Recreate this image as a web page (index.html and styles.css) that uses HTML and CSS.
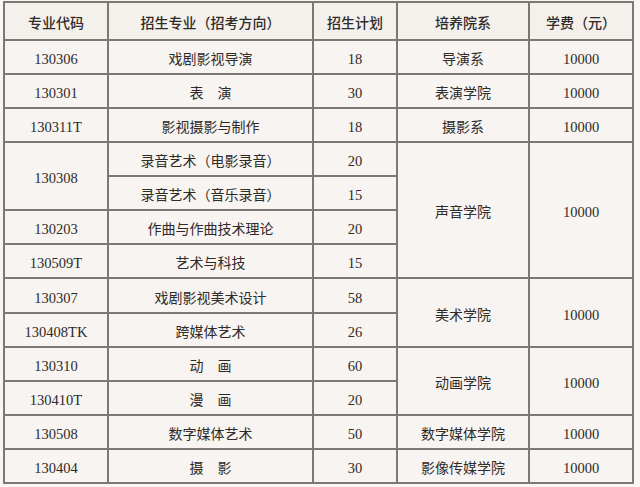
FILE: index.html
```html
<!DOCTYPE html>
<html lang="zh">
<head>
<meta charset="utf-8">
<link rel="stylesheet" href="styles.css">
</head>
<body>
<table class="plan">
  <colgroup>
    <col class="c1"><col class="c2"><col class="c3"><col class="c4"><col class="c5">
  </colgroup>
  <thead>
    <tr class="head">
      <th>专业代码</th><th>招生专业（招考方向）</th><th>招生计划</th><th>培养院系</th><th>学费（元）</th>
    </tr>
  </thead>
  <tbody>
    <tr><td class="num">130306</td><td>戏剧影视导演</td><td class="num">18</td><td>导演系</td><td class="num">10000</td></tr>
    <tr><td class="num">130301</td><td>表　演</td><td class="num">30</td><td>表演学院</td><td class="num">10000</td></tr>
    <tr><td class="num">130311T</td><td>影视摄影与制作</td><td class="num">18</td><td>摄影系</td><td class="num">10000</td></tr>
    <tr><td class="num" rowspan="2">130308</td><td>录音艺术（电影录音）</td><td class="num">20</td><td rowspan="4">声音学院</td><td class="num" rowspan="4">10000</td></tr>
    <tr><td>录音艺术（音乐录音）</td><td class="num">15</td></tr>
    <tr><td class="num">130203</td><td>作曲与作曲技术理论</td><td class="num">20</td></tr>
    <tr><td class="num">130509T</td><td>艺术与科技</td><td class="num">15</td></tr>
    <tr><td class="num">130307</td><td>戏剧影视美术设计</td><td class="num">58</td><td rowspan="2">美术学院</td><td class="num" rowspan="2">10000</td></tr>
    <tr><td class="num">130408TK</td><td>跨媒体艺术</td><td class="num">26</td></tr>
    <tr><td class="num">130310</td><td>动　画</td><td class="num">60</td><td rowspan="2">动画学院</td><td class="num" rowspan="2">10000</td></tr>
    <tr><td class="num">130410T</td><td>漫　画</td><td class="num">20</td></tr>
    <tr><td class="num">130508</td><td>数字媒体艺术</td><td class="num">50</td><td>数字媒体学院</td><td class="num">10000</td></tr>
    <tr><td class="num">130404</td><td>摄　影</td><td class="num">30</td><td>影像传媒学院</td><td class="num">10000</td></tr>
  </tbody>
</table>
</body>
</html>
```

FILE: styles.css
```css
html, body {
  margin: 0;
  padding: 0;
  background: #f8f6f3;
}
body {
  padding: 1px 0 0 3px;
  font-family: "Noto Sans CJK SC", sans-serif;
  color: #2e2b29;
}
.plan {
  border-collapse: collapse;
  table-layout: fixed;
  width: 631px;
  background: #f7f4f1;
}
.c1 { width: 104px; }
.c2 { width: 205px; }
.c3 { width: 84px; }
.c4 { width: 132px; }
.c5 { width: 104px; }
.plan th, .plan td {
  border: 2px solid #7d7874;
  text-align: center;
  vertical-align: middle;
  font-size: 14px;
  line-height: 16px;
}
.plan th {
  height: 32.5px;
  padding: 3px 0 0;
  font-weight: 500;
  background: #f4f0ec;
}
.plan td {
  height: 26.15px;
  padding: 4px 0 2px;
  font-weight: 400;
}
.plan td.num {
  padding: 5px 0 1px;
  font-family: "Liberation Serif", "Noto Sans CJK SC", serif;
  font-size: 14.5px;
}
```
